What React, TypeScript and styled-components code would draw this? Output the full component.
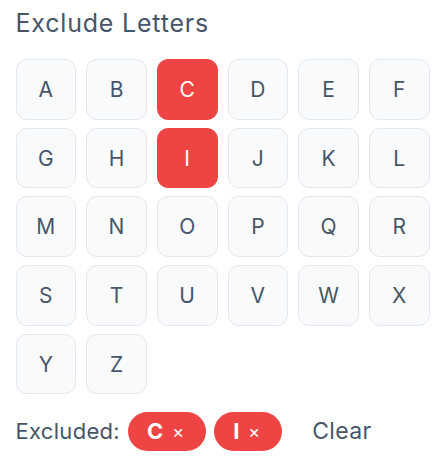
import { useState } from "react";
import styled, { createGlobalStyle } from "styled-components";

const GlobalStyle = createGlobalStyle`
  body {
    margin: 0;
    background: #ffffff;
    font-family: Inter, "Noto Sans", "Liberation Sans", sans-serif;
  }
`;

const Container = styled.div`
  width: 442px;
  box-sizing: border-box;
  padding: 8px 12.5px 0 15.5px;
`;

const Title = styled.h2`
  margin: 0;
  font-size: 25px;
  line-height: 30px;
  font-weight: 400;
  letter-spacing: 0.8px;
  color: #475569;
`;

const LetterGrid = styled.div`
  display: grid;
  grid-template-columns: repeat(6, 1fr);
  column-gap: 10px;
  row-gap: 8px;
  margin-top: 21px;
`;

const LetterButton = styled.button<{ $active: boolean }>`
  aspect-ratio: 1;
  box-sizing: border-box;
  border-radius: 11px;
  border: 1px solid ${props => (props.$active ? "#ef4444" : "#e2e8f0")};
  background: ${props => (props.$active ? "#ef4444" : "#f8fafc")};
  color: ${props => (props.$active ? "#ffffff" : "#475569")};
  font-family: inherit;
  font-size: 21px;
  cursor: pointer;
  padding: 0;
`;

const Footer = styled.div`
  display: flex;
  align-items: center;
  gap: 8px;
  margin-top: 17px;
`;

const Label = styled.span`
  font-size: 22px;
  letter-spacing: 0.3px;
  color: #475569;
`;

const Pill = styled.button`
  height: 39px;
  display: flex;
  align-items: center;
  gap: 9px;
  padding: 0 22px 0 19px;
  border: none;
  border-radius: 999px;
  background: #ef4444;
  color: #ffffff;
  font-family: inherit;
  cursor: pointer;
  b {
    font-size: 22px;
    font-weight: 700;
  }
  span {
    font-size: 18px;
  }
`;

const ClearButton = styled.button`
  margin-left: 8px;
  padding: 6px 14px;
  border: none;
  background: transparent;
  color: #475569;
  font-family: inherit;
  font-size: 23px;
  letter-spacing: 0.3px;
  cursor: pointer;
`;

const LETTERS = "ABCDEFGHIJKLMNOPQRSTUVWXYZ".split("");

function App() {
  const [excluded, setExcluded] = useState<string[]>(["C", "I"]);

  const toggle = (l: string) =>
    setExcluded(prev => (prev.includes(l) ? prev.filter(x => x !== l) : [...prev, l].sort()));

  return (
    <Container>
      <GlobalStyle />
      <Title>Exclude Letters</Title>
      <LetterGrid>
        {LETTERS.map(l => (
          <LetterButton key={l} $active={excluded.includes(l)} onClick={() => toggle(l)}>
            {l}
          </LetterButton>
        ))}
      </LetterGrid>
      <Footer>
        <Label>Excluded:</Label>
        {excluded.map(l => (
          <Pill key={l} onClick={() => toggle(l)}>
            <b>{l}</b>
            <span>×</span>
          </Pill>
        ))}
        <ClearButton onClick={() => setExcluded([])}>Clear</ClearButton>
      </Footer>
    </Container>
  );
}

export default App;
